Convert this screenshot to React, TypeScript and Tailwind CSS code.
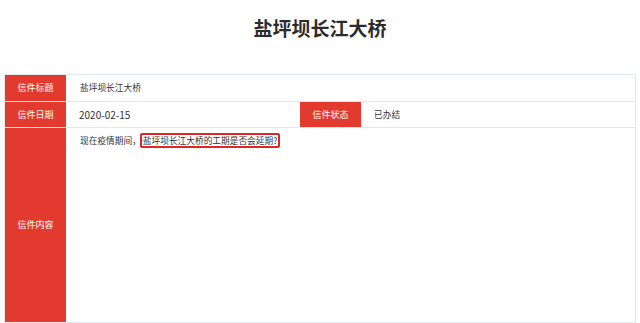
import React from "react";

const font = { fontFamily: '"Noto Sans CJK SC", "Noto Sans", sans-serif' };

const Label = ({ text, className = "" }: { text: string; className?: string }) => (
  <div
    className={`w-[61px] shrink-0 bg-[#e23a2e] text-white text-[9px] flex items-center justify-center ${className}`}
  >
    {text}
  </div>
);

const App = () => {
  return (
    <div
      className="w-[640px] h-[323px] bg-white overflow-hidden text-[#333]"
      style={font}
    >
      <h1 className="h-[74px] pt-[15px] text-center text-[19px] font-bold text-[#2b2b2b] leading-[26px]">
        盐坪坝长江大桥
      </h1>

      <div className="ml-[4px] w-[632px] border border-[#e1e8ef]">
        {/* 信件标题 */}
        <div className="flex h-[27px] border-b border-[#e1e8ef]">
          <Label text="信件标题" />
          <div className="flex-1 flex items-center pl-[14px] text-[8.7px]">
            盐坪坝长江大桥
          </div>
        </div>

        {/* 日期 + 状态 */}
        <div className="flex h-[26px] border-b border-[#e1e8ef]">
          <Label text="信件日期" />
          <div className="w-[234px] flex items-center pl-[13px] text-[10px]">
            2020-02-15
          </div>
          <Label text="信件状态" />
          <div className="flex-1 flex items-center pl-[13px] text-[8.7px]">
            已办结
          </div>
        </div>

        {/* 信件内容 */}
        <div className="flex h-[194px]">
          <Label text="信件内容" />
          <div className="flex-1 pl-[14px] pt-[5px] text-[8.7px] leading-[14px]">
            <span className="mr-[-1px]">现在疫情期间，</span>
            <span className="inline-block border-2 border-[#e0262b] rounded-[2px] px-[1px] leading-[11px]">
              盐坪坝长江大桥的工期是否会延期?
            </span>
          </div>
        </div>
      </div>
    </div>
  );
};

export default App;
